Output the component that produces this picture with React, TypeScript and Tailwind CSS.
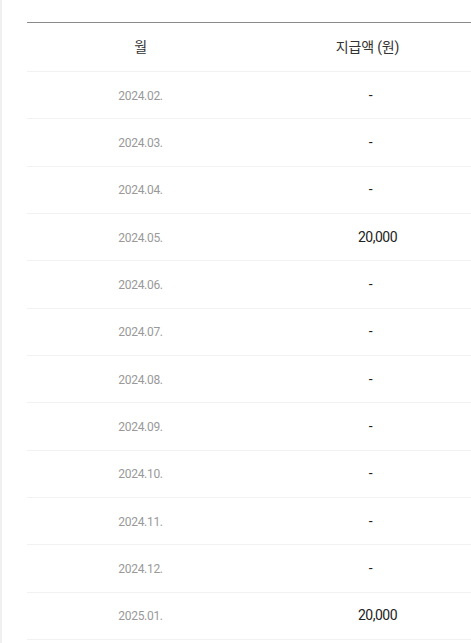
const rows = [
  { month: "2024.02.", amount: "-" },
  { month: "2024.03.", amount: "-" },
  { month: "2024.04.", amount: "-" },
  { month: "2024.05.", amount: "20,000" },
  { month: "2024.06.", amount: "-" },
  { month: "2024.07.", amount: "-" },
  { month: "2024.08.", amount: "-" },
  { month: "2024.09.", amount: "-" },
  { month: "2024.10.", amount: "-" },
  { month: "2024.11.", amount: "-" },
  { month: "2024.12.", amount: "-" },
  { month: "2025.01.", amount: "20,000" },
];

export default function App() {
  return (
    <div
      className="h-[643px] overflow-hidden bg-white border-l-2 border-[#f0f0f0] pt-[22px] pl-[25px]"
      style={{ fontFamily: 'Roboto, "Noto Sans CJK KR", sans-serif' }}
    >
      <div className="w-[454px] border-t border-[#8a8a8a]">
        {/* Header */}
        <div className="grid grid-cols-2 h-[49px] items-center border-b border-[#f2f2f2] text-[14px] text-[#333] tracking-[-0.2px]">
          <div className="text-center">월</div>
          <div className="text-center">지급액 (원)</div>
        </div>

        {rows.map((r, i) => (
          <div
            key={i}
            className="grid grid-cols-2 h-[47.33px] items-center border-b border-[#f2f2f2]"
          >
            <div className="text-center text-[12px] text-[#999] tracking-[-0.3px] pt-[1px]">{r.month}</div>
            <div className="text-center text-[14px] text-[#222] tracking-[-0.5px] pl-[20px]">
              {r.amount === "-" ? <span className="pr-[14px]">-</span> : r.amount}
            </div>
          </div>
        ))}
      </div>
    </div>
  );
}
